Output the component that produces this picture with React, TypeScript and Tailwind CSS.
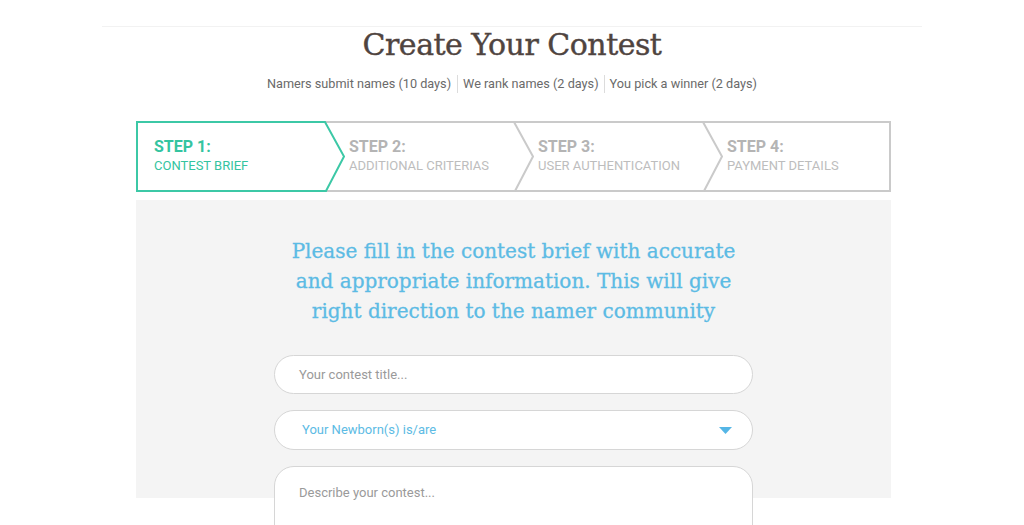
import React from "react";

const slab = { fontFamily: '"DejaVu Serif", "Liberation Serif", serif' };
const roboto = { fontFamily: 'Roboto, "Liberation Sans", sans-serif' };

const steps = [
  { n: "STEP 1:", t: "CONTEST BRIEF", active: true },
  { n: "STEP 2:", t: "ADDITIONAL CRITERIAS", active: false },
  { n: "STEP 3:", t: "USER AUTHENTICATION", active: false },
  { n: "STEP 4:", t: "PAYMENT DETAILS", active: false },
];

function StepBar() {
  return (
    <div className="relative ml-[136px] mt-[28px] h-[71px] w-[755px]">
      <svg
        className="absolute inset-0"
        width="755"
        height="71"
        viewBox="0 0 755 71"
        fill="none"
      >
        <g stroke="#cacaca" strokeWidth="2" strokeLinejoin="miter">
          <path d="M189 1 H754 V70 H190" />
          <path d="M378 1 L397 35.5 L379 70" />
          <path d="M567 1 L586 35.5 L568 70" />
        </g>
        <path
          d="M1 1 H189 L208 35.5 L190 70 H1 Z"
          stroke="#3cc8a6"
          strokeWidth="2"
          fill="white"
        />
      </svg>
      <div className="relative grid h-full grid-cols-[189px_189px_189px_188px]">
        {steps.map((s, i) => (
          <div
            key={i}
            className={`pt-[16px] ${i === 0 ? "pl-[18px]" : "pl-[24px]"}`}
            style={roboto}
          >
            <div
              className={`text-[16px] leading-[20px] font-bold ${
                s.active ? "text-[#34c4a0]" : "text-[#b4b4b4]"
              }`}
            >
              {s.n}
            </div>
            <div
              className={`text-[13px] leading-[18px] ${
                s.active ? "text-[#34c4a0]" : "text-[#bdbdbd]"
              }`}
            >
              {s.t}
            </div>
          </div>
        ))}
      </div>
    </div>
  );
}

export default function App() {
  return (
    <div className="h-[525px] w-[1024px] overflow-hidden bg-white">
      <div className="mx-auto h-[27px] w-[820px] border-b border-[#f2f2f2]" />
      <h1
        className="text-center text-[30px] leading-[36px] tracking-[-0.5px] text-[#4f4440] [-webkit-text-stroke:0.4px_#4f4440]"
        style={slab}
      >
        Create Your Contest
      </h1>
      <div
        className="mt-[12px] flex items-center justify-center text-[12.7px] leading-[18px] text-[#6a6a6a]"
        style={roboto}
      >
        <span className="pr-[6px]">Namers submit names (10 days)</span>
        <span className="border-l border-[#dcdcdc] px-[5px]">
          We rank names (2 days)
        </span>
        <span className="border-l border-[#dcdcdc] pl-[5px]">
          You pick a winner (2 days)
        </span>
      </div>

      <StepBar />

      <div className="ml-[136px] mt-[8px] h-[298px] w-[755px] bg-[#f4f4f4] pt-[36px]">
        <p
          className="text-center text-[20px] leading-[30px] text-[#5cbbe4] [-webkit-text-stroke:0.3px_#5cbbe4]"
          style={slab}
        >
          Please fill in the contest brief with accurate
          <br />
          and appropriate information. This will give
          <br />
          right direction to the namer community
        </p>

        <div className="mx-auto mt-[29px] flex w-[479px] flex-col gap-[16px]" style={roboto}>
          <div className="flex h-[39px] items-center rounded-full border border-[#d6d6d6] bg-white pl-[24px] text-[13px] text-[#9a9a9a]">
            Your contest title...
          </div>
          <div className="flex h-[40px] items-center justify-between rounded-full border border-[#d6d6d6] bg-white pl-[27px] pr-[20px] text-[13px] text-[#5cbbe4]">
            <span>Your Newborn(s) is/are</span>
            <svg width="13" height="7" viewBox="0 0 13 7">
              <path d="M0 0 H13 L6.5 7 Z" fill="#55b6e6" />
            </svg>
          </div>
          <div className="h-[80px] rounded-[20px] border border-[#d6d6d6] bg-white pl-[24px] pt-[16px] text-[13px] text-[#9a9a9a]">
            Describe your contest...
          </div>
        </div>
      </div>
    </div>
  );
}
